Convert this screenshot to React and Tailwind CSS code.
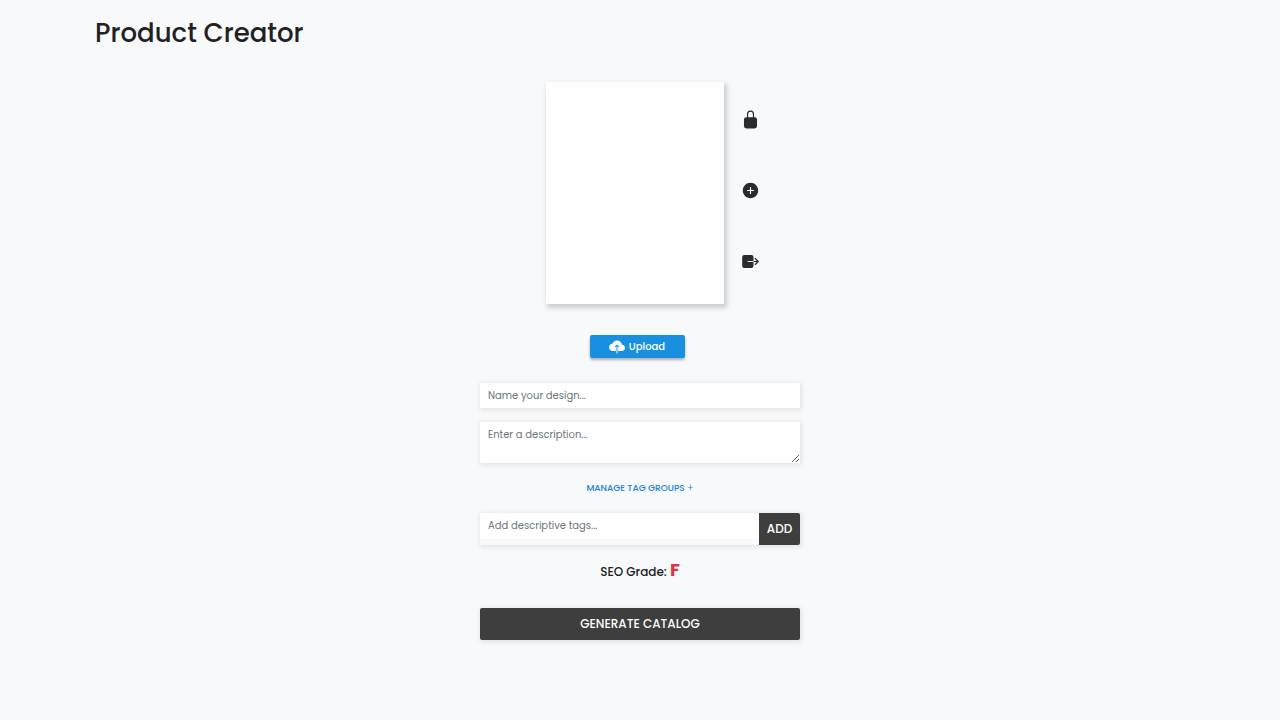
import React, { useState } from 'react';
import { IoLockClosed, IoAddCircle, IoExit, IoCloudUpload } from 'react-icons/io5';

const fieldClass =
    'block w-full bg-white px-2 text-[10px] leading-4 text-gray-700 placeholder:text-[#6c757d] shadow-[1px_1px_5px_1px_rgba(0,0,0,0.09)] outline-none';

const tools = [
    { label: 'Lock design', Icon: IoLockClosed },
    { label: 'Add product', Icon: IoAddCircle },
    { label: 'Export design', Icon: IoExit },
];

const DesignPreview = () => (
    <div className="flex gap-[17px] pl-[66px]">
        <div className="h-[222px] w-[178px] bg-white shadow-[2px_3px_5px_1px_rgba(0,0,0,0.18)]"></div>
        <div className="flex flex-col justify-between pt-7 pb-[33px]">
            {tools.map(({ label, Icon }) => (
                <button key={label} type="button" aria-label={label} className="text-[#292b2c]">
                    <Icon className="size-[19px]" />
                </button>
            ))}
        </div>
    </div>
);

const App = () => {
    const [name, setName] = useState('');
    const [description, setDescription] = useState('');
    const [tags, setTags] = useState('');

    return (
        <div className="min-h-screen bg-[#f8f9fb] font-['Poppins','Inter',sans-serif] text-[#212122]">
            <header className="px-[95px] pt-[13px]">
                <h1 className="text-[26px] leading-10 font-medium">Product Creator</h1>
            </header>

            <main className="mx-auto flex w-80 flex-col pt-[29px] pb-20">
                <DesignPreview />

                <button
                    type="button"
                    className="mt-[31px] mr-1.5 flex h-[23px] w-[95px] items-center justify-center gap-1 self-center rounded-xs bg-[#1890df] text-[10px] font-medium text-white shadow-[0_2px_3px_rgba(0,0,0,0.3)]"
                >
                    <IoCloudUpload className="size-4" />
                    Upload
                </button>

                <input
                    type="text"
                    aria-label="Design name"
                    placeholder="Name your design..."
                    value={name}
                    onChange={(e) => setName(e.target.value)}
                    className={`${fieldClass} mt-[25px] h-[25px]`}
                />
                <textarea
                    aria-label="Description"
                    placeholder="Enter a description..."
                    value={description}
                    onChange={(e) => setDescription(e.target.value)}
                    className={`${fieldClass} mt-[14px] h-[41px] resize pt-[5px]`}
                />

                <button type="button" className="mt-[17px] self-center text-[9px] leading-4 font-medium text-[#1a80e5]">
                    MANAGE TAG GROUPS <span className="text-[10px] font-light">+</span>
                </button>

                <div className="mt-[17px] flex h-8 shadow-[1px_1px_5px_1px_rgba(0,0,0,0.09)]">
                    <input
                        type="text"
                        aria-label="Descriptive tags"
                        placeholder="Add descriptive tags..."
                        value={tags}
                        onChange={(e) => setTags(e.target.value)}
                        className="h-[26px] min-w-0 flex-1 bg-white px-2 text-[10px] leading-4 text-gray-700 outline-none placeholder:text-[#6c757d]"
                    />
                    <button type="button" className="w-[41px] rounded-r-xs bg-[#3e3e3e] text-xs font-medium text-white">
                        ADD
                    </button>
                </div>

                <p className="mt-[13px] text-center text-xs leading-6 font-medium">
                    SEO Grade: <span className="text-lg leading-6 font-bold text-[#dc3545]">F</span>
                </p>

                <button
                    type="button"
                    className="mt-6 h-8 w-full rounded-xs bg-[#3e3e3e] text-xs font-medium text-white shadow-[1px_1px_5px_1px_rgba(0,0,0,0.09)]"
                >
                    GENERATE CATALOG
                </button>
            </main>
        </div>
    );
};

export default App;
